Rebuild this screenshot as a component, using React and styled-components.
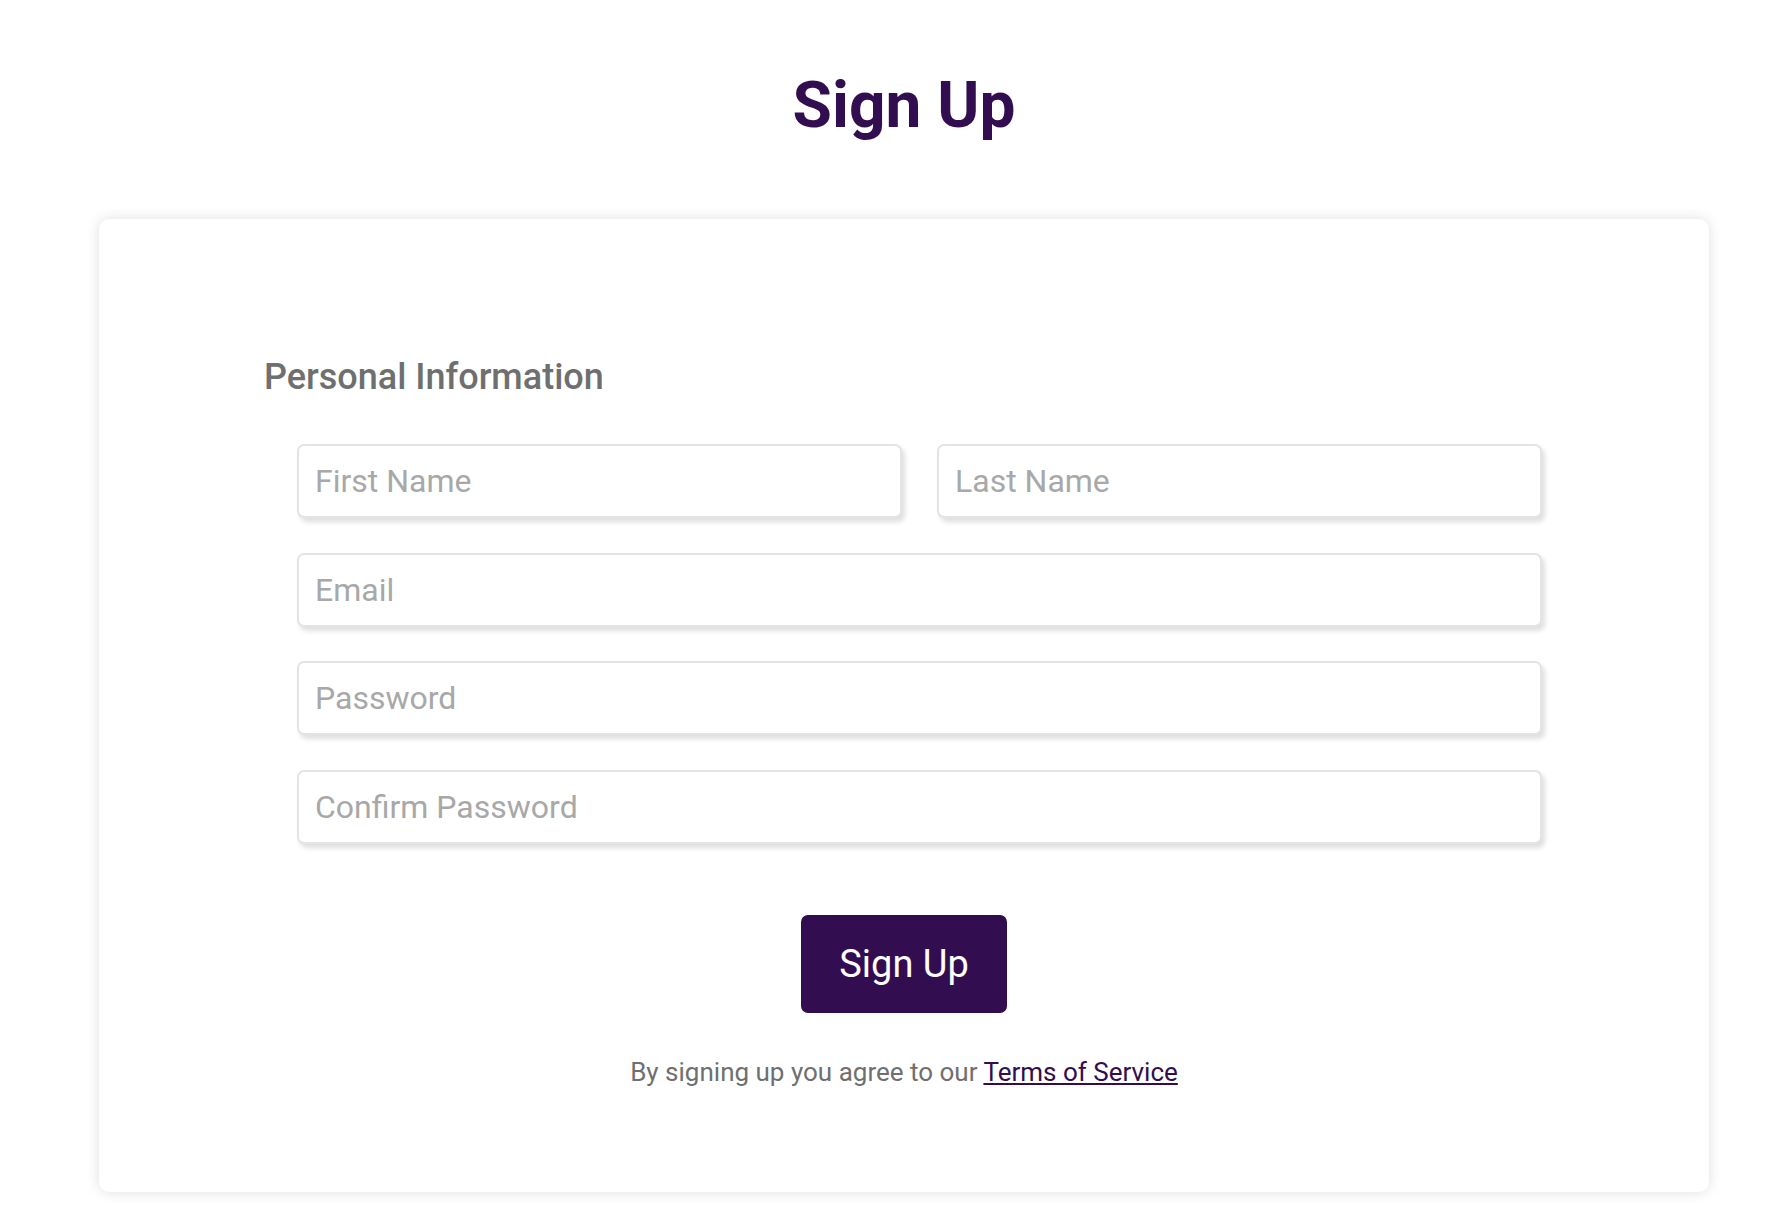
import React, { useState } from 'react';
import styled, { createGlobalStyle } from 'styled-components';

const GlobalStyle = createGlobalStyle`
    body {
        margin: 0;
        background: #ffffff;
        font-family: Roboto, "Liberation Sans", sans-serif;
    }
`

const PURPLE = '#320d50'

export default function App() {

    const [form, setForm] = useState({
        firstName: '',
        lastName: '',
        email: '',
        password: '',
        confirmPassword: '',
    })

    const update = (key) => (e) => setForm({ ...form, [key]: e.target.value })

    const submit = (e) => {
        e.preventDefault()
    }

    return (
        <React.Fragment>
            <GlobalStyle />
            <Page>
                <Title>Sign Up</Title>

                <Card onSubmit={submit}>
                    <Section>
                        <SectionTitle>Personal Information</SectionTitle>

                        <Fields>
                            <Row>
                                <Input placeholder="First Name" value={form.firstName} onChange={update('firstName')} />
                                <Input placeholder="Last Name" value={form.lastName} onChange={update('lastName')} />
                            </Row>
                            <Input type="email" placeholder="Email" value={form.email} onChange={update('email')} />
                            <Input type="password" placeholder="Password" value={form.password} onChange={update('password')} />
                            <Input type="password" placeholder="Confirm Password" value={form.confirmPassword} onChange={update('confirmPassword')} />
                        </Fields>
                    </Section>

                    <SubmitButton type="submit">Sign Up</SubmitButton>

                    <Terms>
                        By signing up you agree to our <a href="#terms">Terms of Service</a>
                    </Terms>
                </Card>
            </Page>
        </React.Fragment>
    );
}

const Page = styled.div`
    padding: 68px 63px 28px 99px;
`

const Title = styled.h1`
    margin: 0 0 76px;
    text-align: center;
    font-size: 64px;
    font-weight: 700;
    line-height: 75px;
    color: ${PURPLE};
`

const Card = styled.form`
    display: flex;
    flex-direction: column;
    align-items: center;
    padding: 137px 0 105px;
    background: #ffffff;
    border-radius: 10px;
    box-shadow: 0 0 14px rgba(0, 0, 0, 0.13);
`

const Section = styled.div`
    align-self: stretch;
    padding: 0 167px 0 165px;
`

const SectionTitle = styled.h2`
    margin: 0 0 46px;
    font-size: 36px;
    font-weight: 500;
    line-height: 42px;
    color: #6f6f6f;
`

const Fields = styled.div`
    display: flex;
    flex-direction: column;
    gap: 34.7px;
    margin-left: 33px;
`

const Row = styled.div`
    display: grid;
    grid-template-columns: 1fr 1fr;
    gap: 35px;
`

const Input = styled.input`
    box-sizing: border-box;
    width: 100%;
    height: 74px;
    padding: 0 16px;
    border: 2px solid #e4e4e4;
    border-radius: 7px;
    box-shadow: 3px 4px 5px rgba(0, 0, 0, 0.13);
    font-family: inherit;
    font-size: 32px;
    color: #333333;
    outline: none;

    &::placeholder {
        color: #a8a8a8;
    }
`

const SubmitButton = styled.button`
    height: 98px;
    margin-top: 71px;
    padding: 0 38px;
    border: none;
    border-radius: 7px;
    background: ${PURPLE};
    color: #ffffff;
    font-family: inherit;
    font-size: 38px;
    cursor: pointer;
`

const Terms = styled.p`
    margin: 44px 0 0;
    font-size: 26px;
    line-height: 30px;
    color: #6f6f6f;

    a {
        color: ${PURPLE};
    }
`
